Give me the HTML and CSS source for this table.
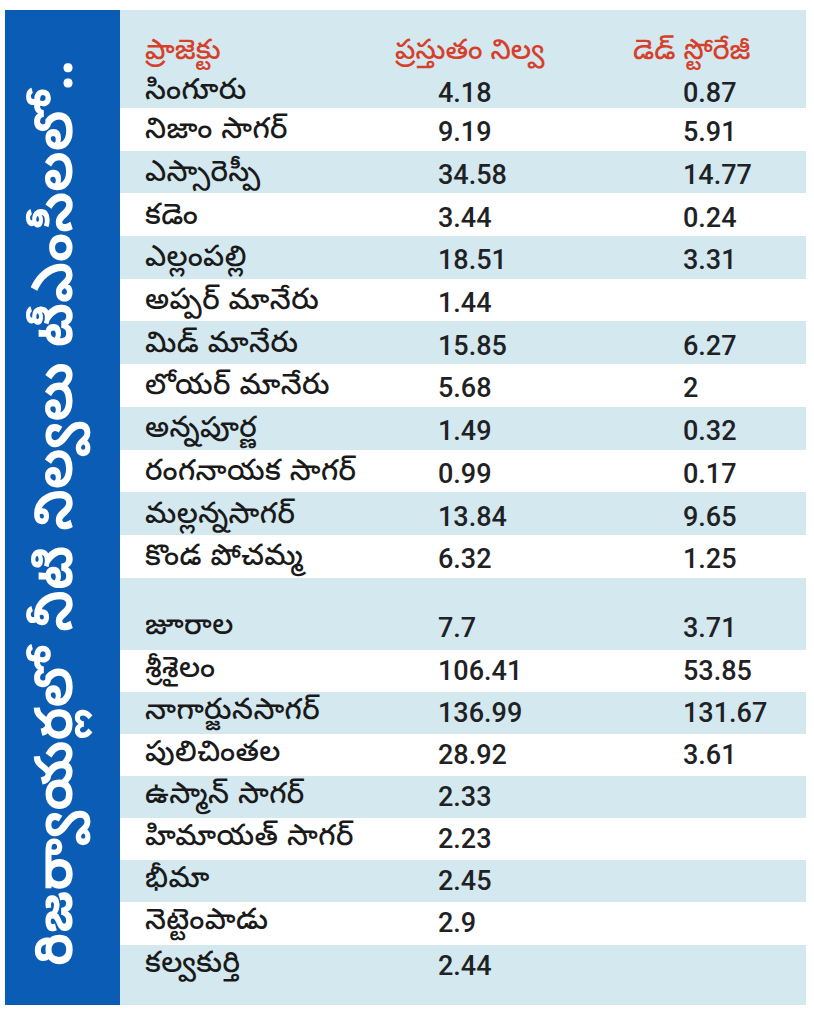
FILE: index.html
```html
<!DOCTYPE html>
<html lang="te">
<head>
<meta charset="utf-8">
<title>రిజర్వాయర్లలో నీటి నిల్వలు</title>
<link rel="stylesheet" href="styles.css">
</head>
<body>
<div class="card">
  <aside class="side"><span class="side-text">రిజర్వాయర్లలో నీటి నిల్వలు టీఎంసీలలో..</span></aside>
  <section class="table">
    <div class="row hl head"><span class="h1">ప్రాజెక్టు</span><span class="h2">ప్రస్తుతం నిల్వ</span><span class="h3">డెడ్ స్టోరేజీ</span></div>
    <div class="row hl first"><span class="name">సింగూరు</span><span class="num n2">4.18</span><span class="num n3">0.87</span></div>
    <div class="row a"><span class="name">నిజాం సాగర్</span><span class="num n2">9.19</span><span class="num n3">5.91</span></div>
    <div class="row a hl"><span class="name">ఎస్సారెస్పీ</span><span class="num n2">34.58</span><span class="num n3">14.77</span></div>
    <div class="row a"><span class="name">కడెం</span><span class="num n2">3.44</span><span class="num n3">0.24</span></div>
    <div class="row a hl"><span class="name">ఎల్లంపల్లి</span><span class="num n2">18.51</span><span class="num n3">3.31</span></div>
    <div class="row a"><span class="name">అప్పర్ మానేరు</span><span class="num n2">1.44</span><span class="num n3"></span></div>
    <div class="row a hl"><span class="name">మిడ్ మానేరు</span><span class="num n2">15.85</span><span class="num n3">6.27</span></div>
    <div class="row a"><span class="name">లోయర్ మానేరు</span><span class="num n2">5.68</span><span class="num n3">2</span></div>
    <div class="row a hl"><span class="name">అన్నపూర్ణ</span><span class="num n2">1.49</span><span class="num n3">0.32</span></div>
    <div class="row a"><span class="name">రంగనాయక సాగర్</span><span class="num n2">0.99</span><span class="num n3">0.17</span></div>
    <div class="row a hl"><span class="name">మల్లన్నసాగర్</span><span class="num n2">13.84</span><span class="num n3">9.65</span></div>
    <div class="row a"><span class="name">కొండ పోచమ్మ</span><span class="num n2">6.32</span><span class="num n3">1.25</span></div>
    <div class="row hl spaced"><span class="name">జూరాల</span><span class="num n2">7.7</span><span class="num n3">3.71</span></div>
    <div class="row b"><span class="name">శ్రీశైలం</span><span class="num n2">106.41</span><span class="num n3">53.85</span></div>
    <div class="row b hl"><span class="name">నాగార్జునసాగర్</span><span class="num n2">136.99</span><span class="num n3">131.67</span></div>
    <div class="row b"><span class="name">పులిచింతల</span><span class="num n2">28.92</span><span class="num n3">3.61</span></div>
    <div class="row b hl"><span class="name">ఉస్మాన్ సాగర్</span><span class="num n2">2.33</span><span class="num n3"></span></div>
    <div class="row b"><span class="name">హిమాయత్ సాగర్</span><span class="num n2">2.23</span><span class="num n3"></span></div>
    <div class="row b hl"><span class="name">భీమా</span><span class="num n2">2.45</span><span class="num n3"></span></div>
    <div class="row b"><span class="name">నెట్టెంపాడు</span><span class="num n2">2.9</span><span class="num n3"></span></div>
    <div class="row hl last"><span class="name">కల్వకుర్తి</span><span class="num n2">2.44</span><span class="num n3"></span></div>
  </section>
</div>
</body>
</html>
```

FILE: styles.css
```css
* { box-sizing: border-box; }

html, body {
  margin: 0;
  padding: 0;
  background: #ffffff;
}

.card {
  display: flex;
  width: 801px;
  height: 995px;
  margin: 10px 0 0 5px;
}

.side {
  width: 115px;
  flex: 0 0 115px;
  background: #0b5cb4;
  display: flex;
  justify-content: center;
  align-items: flex-start;
}

.side-text {
  writing-mode: vertical-rl;
  transform: rotate(180deg);
  color: #ffffff;
  font-family: "Noto Sans Telugu", "Noto Sans", sans-serif;
  font-weight: 700;
  font-size: 53px;
  line-height: 1;
  white-space: nowrap;
  padding-top: 39px;
  height: 100%;
  text-align: start;
}

.table {
  flex: 1;
  display: flex;
  flex-direction: column;
  background: #ffffff;
}

.row {
  display: grid;
  grid-template-columns: 250px 238px 1fr;
  align-items: center;
  padding-left: 25px;
}

.hl { background: #d4e8f0; }

.head { height: 60px; padding-top: 28px; }
.first { height: 38px; padding-top: 8px; }
.a { height: 42.7px; padding-top: 7px; }
.b { height: 42.15px; padding-top: 1px; }
.spaced { height: 72px; padding-top: 29px; }
.last { height: 60px; padding-bottom: 17px; }

.h1, .h2, .h3 {
  font-family: "Noto Sans Telugu", "Noto Sans", sans-serif;
  font-size: 28px;
  font-weight: 500;
  color: #d6402a;
  line-height: 1;
}

.name {
  font-family: "Noto Sans Telugu", "Noto Sans", sans-serif;
  font-size: 29px;
  font-weight: 500;
  letter-spacing: 0.4px;
  color: #1a1a1a;
  line-height: 1;
}

.num {
  font-family: Roboto, "Liberation Sans", Arial, sans-serif;
  font-weight: 500;
  font-size: 27px;
  color: #1f2224;
  line-height: 1;
}

.n2 { padding-left: 43px; }
.n3 { padding-left: 50px; }
```
